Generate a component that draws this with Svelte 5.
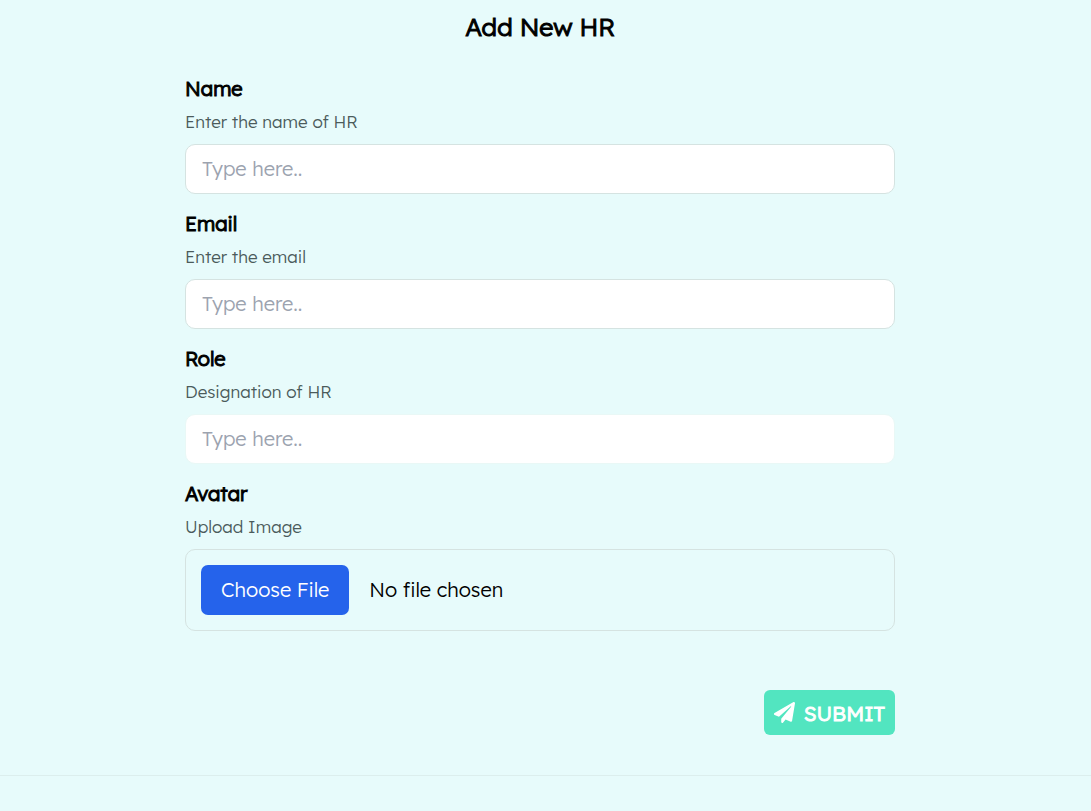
<script>
  let { onsubmit = () => {} } = $props();

  const fields = [
    { id: 'name', label: 'Name', hint: 'Enter the name of HR', type: 'text' },
    { id: 'email', label: 'Email', hint: 'Enter the email', type: 'email' },
    { id: 'role', label: 'Role', hint: 'Designation of HR', type: 'text', plain: true },
  ];

  let values = $state({ name: '', email: '', role: '' });

  function submit(e) {
    e.preventDefault();
    onsubmit({ ...values });
  }
</script>

<main class="page">
  <form class="form" onsubmit={submit}>
    <h1>Add New HR</h1>

    {#each fields as f (f.id)}
      <div class="field">
        <label for={f.id}>{f.label}</label>
        <p class="hint" id="{f.id}-hint">{f.hint}</p>
        <input
          class="text"
          class:plain={f.plain}
          id={f.id}
          type={f.type}
          placeholder="Type here.."
          aria-describedby="{f.id}-hint"
          bind:value={values[f.id]}
        />
      </div>
    {/each}

    <div class="field">
      <label for="avatar">Avatar</label>
      <p class="hint" id="avatar-hint">Upload Image</p>
      <input class="file" id="avatar" type="file" accept="image/*" aria-describedby="avatar-hint" />
    </div>

    <div class="actions">
      <button class="submit" type="submit">
        <svg viewBox="0 0 512 512" aria-hidden="true">
          <path fill="currentColor" d="M476 3 12 271c-18 10-16 36 2 43l107 45L409 105c6-5 13 3 9 9L176 408v81c0 23 28 32 42 15l64-78 125 53c14 6 31-3 33-18l72-432c3-20-19-35-36-26z" />
        </svg>
        <span>SUBMIT</span>
      </button>
    </div>
  </form>
</main>

<footer></footer>

<style>
  :global(body) { background: #e7fbfb; }
  .page, .page input, .page button { font-family: Lexend, Inter, "Liberation Sans", sans-serif; }
  .page { padding: 9px 27px 40px 16px; color: #000; }
  .form { max-width: 710px; margin: 0 auto; }
  /* light letterforms thickened by a stroke, so the headings keep the narrow set of the body text */
  h1, label, .submit span { font-weight: 300; -webkit-text-stroke: 1px currentColor; }
  h1 { margin: 0 0 29px; font-size: 25px; line-height: 36px; text-align: center; }

  .field { margin-bottom: 15px; }
  label { display: block; margin-bottom: 6px; font-size: 20px; line-height: 30px; }
  .hint { margin: 0 0 10px; font-size: 17px; line-height: 24px; font-weight: 300; color: #4b5b5b; }

  .text, .file {
    display: block; box-sizing: border-box; width: 100%;
    border: 1px solid #d5e3e1; border-radius: 10px; font-size: 20px; font-weight: 300;
  }
  .text { height: 50px; padding: 0 16px 2px; background: #fff; color: #000; }
  .text::placeholder { color: #9ca3af; opacity: 1; }
  .plain { border-color: #e9f8f6; }
  .text:focus { outline: 2px solid #52e5c0; }

  .file { padding: 15px; color: #000; }
  .file::file-selector-button {
    height: 50px; margin: 0 20px 0 0; padding: 0 20px 2px; border: 0; border-radius: 7px;
    background: #2563eb; color: #fff; font: inherit; cursor: pointer;
  }
  .file::file-selector-button:hover { background: #1d4ed8; }

  .actions { display: flex; justify-content: flex-end; margin-top: 59px; }
  .submit {
    display: inline-flex; align-items: center; gap: 9px; height: 45px; padding: 0 10px;
    border: 0; border-radius: 6px; background: #52e5c0; color: #fff;
    font-size: 21px; cursor: pointer;
  }
  .submit:hover { background: #3fd6b0; }
  .submit svg { width: 21px; height: 21px; }

  footer { height: 35px; border-top: 1px solid #dceeed; }
</style>
